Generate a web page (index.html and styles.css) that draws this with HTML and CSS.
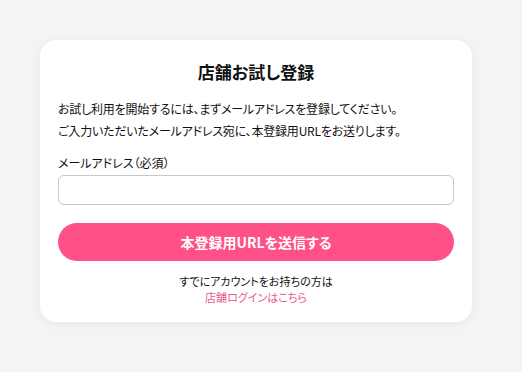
FILE: index.html
```html
<!DOCTYPE html>
<html lang="ja">
<head>
    <meta charset="UTF-8">
    <meta name="viewport" content="width=device-width, initial-scale=1.0">
    <title>店舗お試し登録</title>
    <link rel="stylesheet" href="styles.css">
</head>
<body>
    <div class="card">
        <h2 class="title">店舗お試し登録</h2>
        <p class="lead">お試し利用を開始するには、まずメールアドレスを登録してください。<br>ご入力いただいたメールアドレス宛に、本登録用URLをお送りします。</p>
        <form class="trial-form">
            <label for="email">メールアドレス（必須）</label>
            <input type="email" id="email" name="email" required>
            <button type="submit">本登録用URLを送信する</button>
        </form>
        <div class="login-note">
            <p>すでにアカウントをお持ちの方は</p>
            <a href="#">店舗ログインはこちら</a>
        </div>
    </div>
</body>
</html>
```

FILE: styles.css
```css
body {
    font-family: "Noto Sans CJK JP", "Noto Sans", sans-serif;
    font-feature-settings: "palt";
    background-color: #f3f4f6;
    color: #111;
    margin: 0;
    padding: 40px;
}

.card {
    width: 396px;
    background-color: #fff;
    padding: 18px 18px 17px;
    border-radius: 16px;
    box-shadow: 0 2px 10px rgba(0, 0, 0, 0.06);
}

.title {
    text-align: center;
    font-size: 17px;
    font-weight: bold;
    margin: 2px 0 14px;
    line-height: 24px;
}

.lead {
    font-size: 12px;
    line-height: 22px;
    letter-spacing: -0.2px;
    margin: 0 0 12px;
}

.trial-form {
    display: flex;
    flex-direction: column;
}

label {
    font-size: 12px;
    line-height: 18px;
    margin-bottom: 3px;
}

input {
    height: 30px;
    box-sizing: border-box;
    border: 1px solid #c8c8c8;
    border-radius: 6px;
    padding: 0 10px;
    font-size: 13px;
}

button {
    margin-top: 18px;
    height: 38px;
    border: none;
    border-radius: 19px;
    background-color: #ff5087;
    color: #fff;
    font-family: inherit;
    font-feature-settings: "palt";
    font-size: 14px;
    font-weight: bold;
    cursor: pointer;
}

.login-note {
    text-align: center;
    font-size: 11px;
    line-height: 16px;
    margin-top: 12px;
}

.login-note p {
    margin: 0;
}

.login-note a {
    color: #e85a8c;
    text-decoration: none;
}
```
